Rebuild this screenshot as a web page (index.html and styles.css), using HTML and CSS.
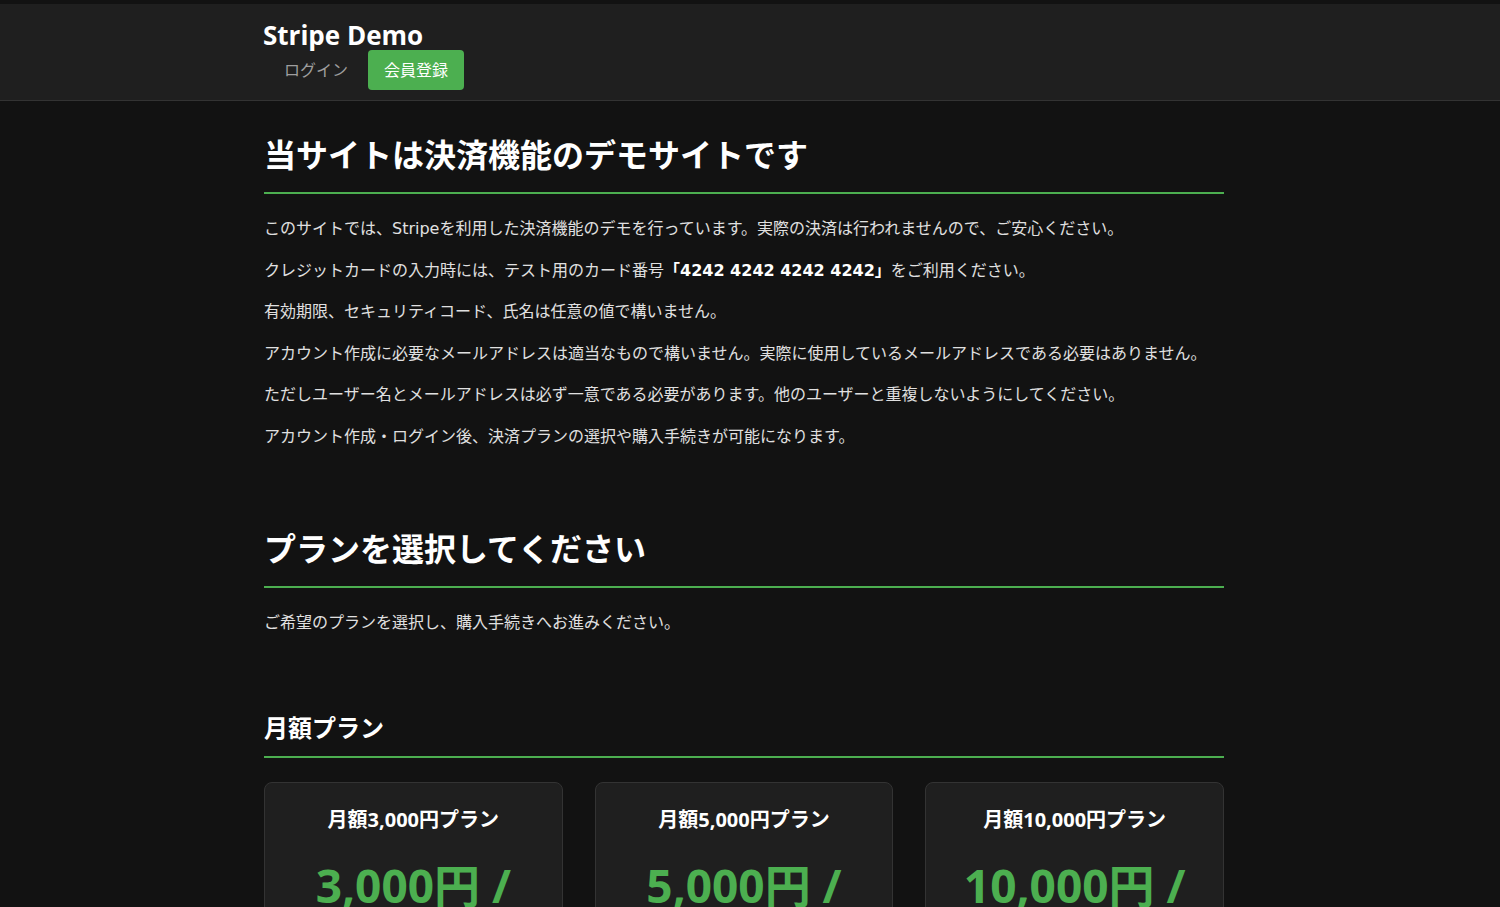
FILE: index.html
```html
<!DOCTYPE html>
<html lang="ja">
<head>
<meta charset="utf-8">
<title>Stripe Demo</title>
<link rel="stylesheet" href="styles.css">
</head>
<body>
<header class="site-header">
  <div class="container">
    <div class="brand">Stripe Demo</div>
    <nav class="nav">
      <a class="nav-link" href="#">ログイン</a>
      <a class="nav-btn" href="#">会員登録</a>
    </nav>
  </div>
</header>
<main class="container main">
  <h1 class="section-title">当サイトは決済機能のデモサイトです</h1>
  <p>このサイトでは、Stripeを利用した決済機能のデモを行っています。実際の決済は行われませんので、ご安心ください。</p>
  <p>クレジットカードの入力時には、テスト用のカード番号<strong>「4242 4242 4242 4242」</strong>をご利用ください。</p>
  <p>有効期限、セキュリティコード、氏名は任意の値で構いません。</p>
  <p>アカウント作成に必要なメールアドレスは適当なもので構いません。実際に使用しているメールアドレスである必要はありません。</p>
  <p>ただしユーザー名とメールアドレスは必ず一意である必要があります。他のユーザーと重複しないようにしてください。</p>
  <p>アカウント作成・ログイン後、決済プランの選択や購入手続きが可能になります。</p>

  <h2 class="section-title second">プランを選択してください</h2>
  <p>ご希望のプランを選択し、購入手続きへお進みください。</p>

  <h3 class="sub-title">月額プラン</h3>
  <div class="plans">
    <div class="card">
      <div class="card-title">月額3,000円プラン</div>
      <div class="price">3,000円 / 月</div>
    </div>
    <div class="card">
      <div class="card-title">月額5,000円プラン</div>
      <div class="price">5,000円 / 月</div>
    </div>
    <div class="card">
      <div class="card-title">月額10,000円プラン</div>
      <div class="price">10,000円 / 月</div>
    </div>
  </div>
</main>
</body>
</html>
```

FILE: styles.css
```css
* { box-sizing: border-box; }
html, body {
  margin: 0;
  padding: 0;
  background: #121212;
  color: #e0e0e0;
  font-family: "Open Sans", "Noto Sans CJK JP", sans-serif;
}
body { padding-top: 4px; }
.container {
  width: 960px;
  margin-left: calc(50% - 486px);
}
.site-header {
  background: #1f1f1f;
  border-bottom: 1px solid #333;
  padding: 16px 0 10px;
}
.brand {
  font-size: 26px;
  font-weight: 700;
  color: #fff;
  line-height: 30px;
  margin-left: -1px;
}
.nav {
  display: flex;
  align-items: center;
  height: 40px;
}
.nav-link {
  color: #9e9e9e;
  text-decoration: none;
  font-size: 16px;
  padding: 0 20px;
  line-height: 40px;
}
.nav-btn {
  background: #4caf50;
  color: #fff;
  text-decoration: none;
  font-size: 16px;
  padding: 0 16px;
  line-height: 40px;
  border-radius: 4px;
}
.main { padding-top: 35px; padding-bottom: 40px; }
.section-title {
  margin: 0 0 22px;
  font-size: 32px;
  line-height: 38px;
  font-weight: 700;
  color: #fff;
  padding-bottom: 18px;
  border-bottom: 2px solid #4caf50;
}
.section-title.second { margin-top: 80px; }
p {
  margin: 0 0 16px;
  font-family: "DejaVu Sans", "Noto Sans CJK JP", sans-serif;
  font-size: 16px;
  line-height: 25.6px;
}
p strong { color: #fff; font-weight: 700; }
.sub-title {
  margin: 78px 0 24px;
  font-size: 24px;
  line-height: 29px;
  font-weight: 700;
  color: #fff;
  padding-bottom: 14px;
  border-bottom: 2px solid #4caf50;
}
.plans {
  display: grid;
  grid-template-columns: repeat(3, 1fr);
  gap: 32px;
}
.card {
  background: #1f1f1f;
  border: 1px solid #333;
  border-radius: 8px;
  padding: 25px 36px 30px;
  text-align: center;
}
.card-title {
  font-size: 20px;
  line-height: 24px;
  font-weight: 700;
  color: #fff;
}
.price {
  margin-top: 24px;
  font-size: 46px;
  line-height: 58px;
  font-weight: 700;
  color: #4caf50;
}
```
